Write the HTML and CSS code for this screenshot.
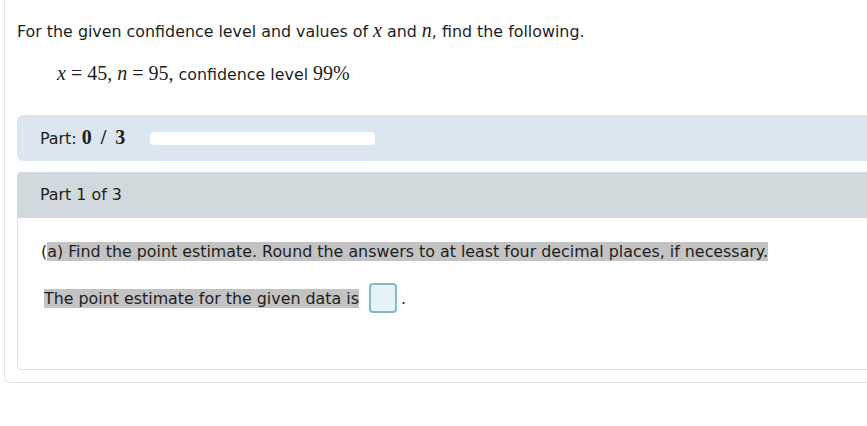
FILE: index.html
```html
<!DOCTYPE html>
<html>
<head>
<meta charset="utf-8">
<link rel="stylesheet" href="styles.css">
</head>
<body>
<div class="outer">
  <p class="intro">For the given confidence level and values of <span class="mi">x</span> and <span class="mi">n</span>, find the following.</p>
  <p class="given"><span class="math"><span class="mi">x</span><span class="eq">=</span>45, <span class="mi">n</span><span class="eq">=</span>95,</span> confidence level <span class="math">99%</span></p>
  <div class="partbar">
    <span class="partlabel">Part: <b class="score">0 / 3</b></span>
    <span class="progress"></span>
  </div>
  <div class="partbox">
    <div class="parthead">Part 1 of 3</div>
    <div class="partbody">
      <p class="q">(<span class="hl">a) Find the point estimate. Round the answers to at least four decimal places, if necessary.</span></p>
      <p class="ans"><span class="hl">The point estimate for the given data is</span><span class="input"></span>.</p>
    </div>
  </div>
</div>
</body>
</html>
```
FILE: styles.css
```css
html, body {
  margin: 0;
  padding: 0;
  overflow: hidden;
  background: #ffffff;
}
body {
  font-family: "DejaVu Sans", Verdana, sans-serif;
  font-size: 15.86px;
  color: #1e1e1e;
}
.outer {
  margin-left: 4px;
  border-left: 1px solid #e2e6e9;
  border-bottom: 1px solid #e2e6e9;
  border-bottom-left-radius: 6px;
  padding: 20px 0 12px 12px;
}
p { margin: 0; }
.intro {
  line-height: 20px;
}
.mi {
  font-family: "Liberation Serif", "Times New Roman", serif;
  font-style: italic;
  font-size: 20px;
  line-height: 1;
}
.math {
  font-family: "Liberation Serif", "Times New Roman", serif;
  font-size: 20px;
  line-height: 1;
}
.eq {
  margin: 0 5px;
}
.given {
  margin-top: 21px;
  padding-left: 40px;
  line-height: 20px;
}
.partbar {
  margin-top: 30px;
  height: 46px;
  background: #dbe6f0;
  border-radius: 6px 0 0 6px;
  display: flex;
  align-items: center;
  padding-left: 23px;
}
.partlabel {
  line-height: 20px;
}
.score {
  font-family: "Liberation Serif", "Times New Roman", serif;
  font-size: 20px;
  font-weight: bold;
  word-spacing: 4px;
  line-height: 1;
}
.progress {
  margin-left: 25px;
  width: 225px;
  height: 13px;
  background: #ffffff;
  border-radius: 4px;
}
.partbox {
  margin-top: 11px;
  border-left: 1px solid #dde2e5;
  border-bottom: 1px solid #dde2e5;
  border-radius: 5px 0 0 5px;
}
.parthead {
  height: 46px;
  background: #d1d9dc;
  border-top-left-radius: 4px;
  display: flex;
  align-items: center;
  padding-left: 23px;
  line-height: 20px;
  margin-left: -1px;
}
.partbody {
  padding: 24px 0 56px 23px;
}
.q {
  line-height: 19px;
}
.hl {
  background: #c3c3c3;
}
.ans {
  margin-top: 22px;
  padding-left: 3px;
  display: flex;
  align-items: center;
  line-height: 19px;
}
.input {
  display: inline-block;
  margin-left: 10px;
  margin-right: 4px;
  border: 2px solid #7fbcc6;
  border-radius: 4px;
  background: #e6f4f8;
  width: 24px;
  height: 26px;
}
```
